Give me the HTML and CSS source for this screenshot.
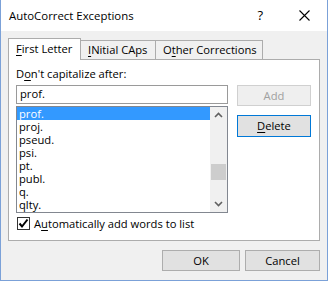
FILE: index.html
```html
<!DOCTYPE html>
<html>
<head>
<meta charset="utf-8">
<link rel="stylesheet" href="styles.css">
</head>
<body>
<div class="window">
  <div class="titlebar">
    <span class="title">AutoCorrect Exceptions</span>
    <span class="help">?</span>
    <svg class="close" width="11" height="11" viewBox="0 0 11 11"><path d="M0.5 0.5 L10.5 10.5 M10.5 0.5 L0.5 10.5" stroke="#000" stroke-width="1.1" fill="none"/></svg>
  </div>
  <div class="body">
    <div class="tabs">
      <div class="tab active"><span><u>F</u>irst Letter</span></div>
      <div class="tab"><span><u>I</u>Nitial CAps</span></div>
      <div class="tab"><span>O<u>t</u>her Corrections</span></div>
    </div>
    <div class="panel">
      <div class="label">D<u>o</u>n't capitalize after:</div>
      <div class="main">
        <div class="leftcol">
          <div class="input">prof.</div>
          <div class="list">
            <div class="items">
              <div class="item sel">prof.</div>
              <div class="item">proj.</div>
              <div class="item">pseud.</div>
              <div class="item">psi.</div>
              <div class="item">pt.</div>
              <div class="item">publ.</div>
              <div class="item">q.</div>
              <div class="item">qlty.</div>
            </div>
            <div class="scrollbar">
              <svg class="arrow" width="17" height="17" viewBox="0 0 17 17"><path d="M5 10 L8.5 6.5 L12 10" stroke="#606060" stroke-width="1.6" fill="none"/></svg>
              <div class="track"><div class="thumb"></div></div>
              <svg class="arrow" width="17" height="17" viewBox="0 0 17 17"><path d="M5 7 L8.5 10.5 L12 7" stroke="#606060" stroke-width="1.6" fill="none"/></svg>
            </div>
          </div>
        </div>
        <div class="rightcol">
          <div class="btn disabled"><span>Add</span></div>
          <div class="btn focus"><span><u>D</u>elete</span></div>
        </div>
      </div>
      <div class="check">
        <span class="box"><svg width="11" height="11" viewBox="0 0 11 11"><path d="M1.5 5.5 L4 8.5 L9.5 1.5" stroke="#000" stroke-width="2" fill="none"/></svg></span>
        <span>A<u>u</u>tomatically add words to list</span>
      </div>
    </div>
    <div class="footer">
      <div class="btn ok"><span>OK</span></div>
      <div class="btn cancel"><span>Cancel</span></div>
    </div>
  </div>
</div>
</body>
</html>
```

FILE: styles.css
```css
* { box-sizing: border-box; }
html, body { margin: 0; padding: 0; }
body {
  font-family: "Open Sans", "Noto Sans", sans-serif;
  font-size: 11.2px;
  color: #000;
  background: #fff;
}
u { text-decoration: underline; text-underline-offset: 2px; text-decoration-thickness: 1px; }
.window {
  width: 328px;
  height: 281px;
  border: 1px solid #7ba1d8;
  border-top: none;
  display: flex;
  flex-direction: column;
}
.titlebar {
  height: 31px;
  background: #fff;
  display: flex;
  align-items: center;
  padding-left: 8px;
  padding-bottom: 1px;
}
.title { flex: 1; font-size: 11.4px; }
.help { font-size: 13px; margin-right: 36px; }
.close { margin-right: 17px; }
.body {
  flex: 1;
  background: #f0f0f0;
  padding: 7px 7px 0 7px;
  display: flex;
  flex-direction: column;
}
.tabs {
  display: flex;
  align-items: flex-end;
  height: 21px;
  position: relative;
  z-index: 1;
}
.tab {
  height: 19px;
  border: 1px solid #acacac;
  border-bottom: none;
  background: #f0f0f0;
  padding: 0 0 0 7px;
  line-height: 18px;
  white-space: nowrap;
  margin-left: -1px;
}
.tab:nth-child(2) { width: 76px; }
.tab:nth-child(3) { width: 108px; }
.tab.active {
  height: 22px;
  margin-left: 0;
  margin-bottom: -1px;
  background: #fff;
  width: 73px;
  padding-left: 7px;
  line-height: 20px;
}
.panel {
  background: #fff;
  border: 1px solid #acacac;
  height: 182px;
  padding: 6px 7px 0 7px;
}
.label { height: 19px; line-height: 16px; }
.main { display: flex; }
.leftcol { width: 212px; display: flex; flex-direction: column; }
.input {
  height: 19px;
  border: 1px solid #9a9a9a;
  padding-left: 3px;
  line-height: 16px;
  margin-bottom: 2px;
}
.list {
  height: 107px;
  border: 1px solid #828790;
  display: flex;
}
.items { flex: 1; }
.item {
  height: 13px;
  line-height: 13px;
  padding-left: 2px;
}
.item.sel { background: #3399ff; color: #fff; }
.scrollbar {
  width: 17px;
  background: #f0f0f0;
  display: flex;
  flex-direction: column;
}
.arrow { display: block; }
.track { flex: 1; }
.thumb { margin-top: 40px; height: 16px; background: #cdcdcd; margin-left: 1px; margin-right: 1px; }
.rightcol { margin-left: 9px; display: flex; flex-direction: column; gap: 9px; }
.btn {
  width: 74px;
  height: 21px;
  border: 1px solid #adadad;
  background: #e1e1e1;
  text-align: center;
  line-height: 19px;
  white-space: nowrap;
}
.btn.disabled { background: #efefef; border-color: #d0d0d0; color: #a0a0a0; }
.btn.focus { border-color: #0078d7; height: 22px; line-height: 20px; }
.check {
  display: flex;
  align-items: center;
  margin-top: 4px;
  height: 13px;
  padding-left: 1px;
}
.box {
  width: 13px;
  height: 13px;
  border: 1px solid #333;
  background: #fff;
  display: flex;
  align-items: center;
  justify-content: center;
  margin-right: 4px;
  flex: none;
}
.box svg { display: block; }
.footer {
  display: flex;
  justify-content: flex-end;
  gap: 5px;
  padding-top: 9px;
}
.btn.ok { width: 78px; }
.btn.cancel { width: 75px; }
```
